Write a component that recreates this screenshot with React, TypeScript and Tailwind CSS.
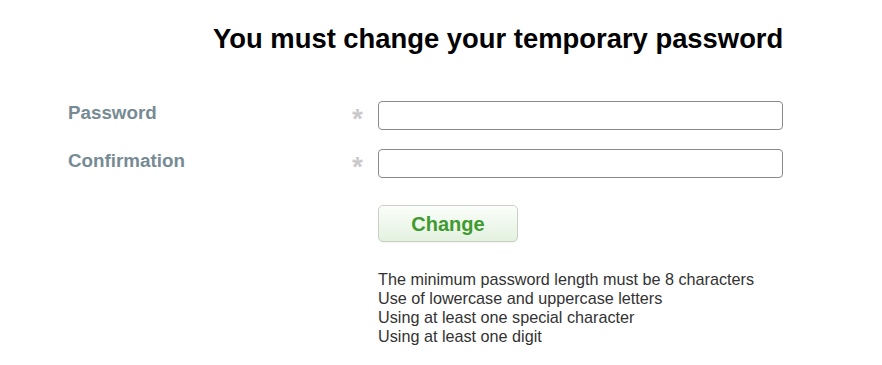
export default function App() {
  const hints = [
    'The minimum password length must be 8 characters',
    'Use of lowercase and uppercase letters',
    'Using at least one special character',
    'Using at least one digit',
  ];

  return (
    <div className="min-h-[365px] w-[882px] bg-white font-['Liberation_Sans',Arial,sans-serif]">
      <h1 className="pl-[213px] pt-[23px] text-[27.4px] font-bold leading-[32px] text-black">
        You must change your temporary password
      </h1>

      <form className="mt-[46px] pl-[68px]" onSubmit={(e) => e.preventDefault()}>
        <div className="flex h-[29px] items-start">
          <label htmlFor="pwd" className="mt-[1px] w-[284px] text-[18.8px] font-bold leading-[22px] text-[#778b94]">
            Password
          </label>
          <span className="h-[29px] w-[26px] pt-[3px] text-[28px] font-bold leading-[29px] text-[#cacaca]">*</span>
          <input
            id="pwd"
            type="password"
            className="h-[29px] w-[405px] rounded-[4px] border border-[#8a8a8a] bg-white px-2 outline-none"
          />
        </div>

        <div className="mt-[19px] flex h-[29px] items-start">
          <label htmlFor="confirm" className="mt-[1px] w-[284px] text-[18.8px] font-bold leading-[22px] text-[#778b94]">
            Confirmation
          </label>
          <span className="h-[29px] w-[26px] pt-[3px] text-[28px] font-bold leading-[29px] text-[#cacaca]">*</span>
          <input
            id="confirm"
            type="password"
            className="h-[29px] w-[405px] rounded-[4px] border border-[#8a8a8a] bg-white px-2 outline-none"
          />
        </div>

        <div className="ml-[310px] mt-[27px]">
          <button
            type="submit"
            className="h-[37px] w-[140px] rounded-[5px] border border-[#c9d1c7] bg-gradient-to-b from-[#fbfefa] to-[#e3f1df] text-[20px] font-bold text-[#3f9a2f] shadow-[0_1px_1px_rgba(0,0,0,0.05)]"
          >
            Change
          </button>

          <div className="mt-[28px] text-[16.2px] leading-[19px] text-[#333333]">
            {hints.map((h) => (
              <div key={h}>{h}</div>
            ))}
          </div>
        </div>
      </form>
    </div>
  );
}
